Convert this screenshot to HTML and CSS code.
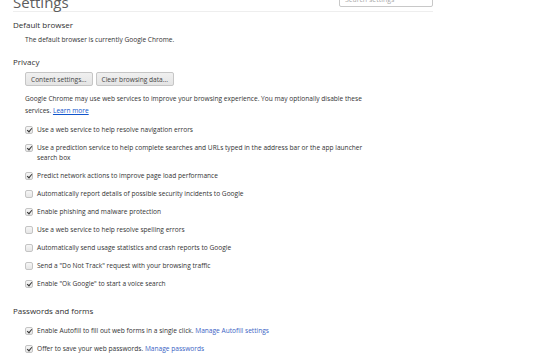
FILE: index.html
```html
<!DOCTYPE html>
<html lang="en">
<head>
    <meta charset="UTF-8">
    <title>Settings</title>
    <meta name="viewport" content="width=device-width, initial-scale=1.0">
    <link rel="stylesheet" href="styles.css">
</head>
<body>
    <div class="page">
        <header class="page-header">
            <h1>Settings</h1>
            <input class="search" type="search" placeholder="Search settings">
        </header>

        <section class="section">
            <h3>Default browser</h3>
            <div class="section-body">
                <p class="note">The default browser is currently Google Chrome.</p>
            </div>
        </section>

        <section class="section">
            <h3>Privacy</h3>
            <div class="section-body">
                <div class="buttons">
                    <button type="button">Content settings...</button>
                    <button type="button">Clear browsing data...</button>
                </div>
                <p class="intro">Google Chrome may use web services to improve your browsing experience. You may optionally disable these services. <a href="#">Learn more</a></p>

                <label class="check"><span class="box on"></span><span>Use a web service to help resolve navigation errors</span></label>
                <label class="check"><span class="box on"></span><span>Use a prediction service to help complete searches and URLs typed in the address bar or the app launcher search box</span></label>
                <label class="check"><span class="box on"></span><span>Predict network actions to improve page load performance</span></label>
                <label class="check"><span class="box"></span><span>Automatically report details of possible security incidents to Google</span></label>
                <label class="check"><span class="box on"></span><span>Enable phishing and malware protection</span></label>
                <label class="check"><span class="box"></span><span>Use a web service to help resolve spelling errors</span></label>
                <label class="check"><span class="box"></span><span>Automatically send usage statistics and crash reports to Google</span></label>
                <label class="check"><span class="box"></span><span>Send a "Do Not Track" request with your browsing traffic</span></label>
                <label class="check"><span class="box on"></span><span>Enable "Ok Google" to start a voice search</span></label>
            </div>
        </section>

        <section class="section passwords">
            <h3>Passwords and forms</h3>
            <div class="section-body">
                <label class="check"><span class="box on"></span><span>Enable Autofill to fill out web forms in a single click. <a class="plain" href="#">Manage Autofill settings</a></span></label>
                <label class="check"><span class="box on"></span><span>Offer to save your web passwords. <a class="plain" href="#">Manage passwords</a></span></label>
            </div>
        </section>
    </div>
</body>
</html>
```

FILE: styles.css
```css
/* Global Reset */
* {
    margin: 0;
    padding: 0;
    box-sizing: border-box;
}
body {
    font-family: 'Open Sans', 'Noto Sans', sans-serif;
    background: #fff;
    color: #333;
    overflow: hidden;
}
.page {
    width: 433px;
    padding-left: 13px;
}
.page-header {
    height: 12px;
    display: flex;
    justify-content: space-between;
    align-items: flex-end;
    border-bottom: 1px solid #eee;
    padding-bottom: 4px;
}
h1 {
    font-size: 15px;
    font-weight: normal;
    color: #5c5c5c;
    line-height: 16px;
    margin-bottom: -3px;
}
.search {
    width: 94px;
    height: 15px;
    border: 1px solid #c8c8c8;
    border-radius: 2px;
    padding: 0 5px;
    font-family: inherit;
    font-size: 7px;
    color: #333;
}
.search::placeholder {
    color: #aaa;
}
.section {
    margin-top: 6px;
}
h3 {
    font-size: 8px;
    font-weight: normal;
    color: #303030;
    line-height: 14px;
}
.section-body {
    padding-left: 12px;
    font-size: 6.6px;
    color: #333;
}
.note {
    margin-top: 2px;
    line-height: 12px;
}
.section + .section {
    margin-top: 9px;
}
.buttons {
    display: flex;
    gap: 3px;
    margin-top: 3px;
}
button {
    height: 14px;
    padding: 0 5px;
    font-family: inherit;
    font-size: 6.6px;
    color: #444;
    background: linear-gradient(#f0f0f0, #e4e4e4);
    border: 1px solid #c6c6c6;
    border-radius: 2px;
}
.intro {
    margin-top: 7px;
    line-height: 12px;
    width: 345px;
}
a {
    color: #15c;
}
a.plain {
    text-decoration: none;
    color: #3b5fc4;
}
.check {
    display: flex;
    align-items: flex-start;
    gap: 4px;
    margin-top: 8px;
    line-height: 10px;
    width: 345px;
}
.intro + .check {
    margin-top: 8px;
}
.box {
    flex: none;
    width: 8px;
    height: 8px;
    margin-top: 1px;
    border: 1px solid #c4c4c4;
    border-radius: 2px;
    background: linear-gradient(#f6f6f6, #e6e6e6);
    position: relative;
}
.box.on::after {
    content: "";
    position: absolute;
    left: 2px;
    top: 0;
    width: 2px;
    height: 4px;
    border: solid #333;
    border-width: 0 1.5px 1.5px 0;
    transform: rotate(40deg);
}
.section.passwords {
    margin-top: 15px;
}
.passwords .check:first-child {
    margin-top: 8px;
}
```
